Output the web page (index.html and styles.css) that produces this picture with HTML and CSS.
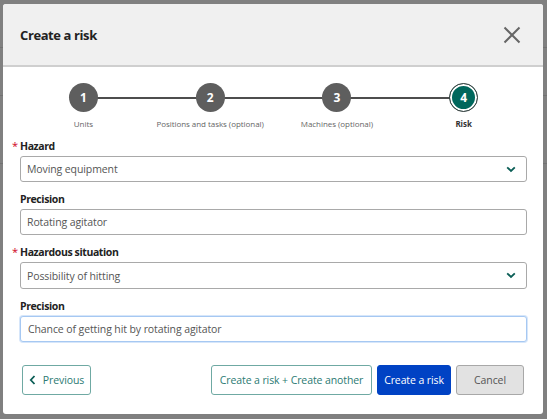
FILE: index.html
```html
<!DOCTYPE html>
<html lang="en">
<head>
<meta charset="utf-8">
<title>Create a risk</title>
<link rel="stylesheet" href="styles.css">
</head>
<body>
<div class="dialog">
  <div class="dialog-header">
    <h1 class="dialog-title">Create a risk</h1>
    <button class="close-btn" aria-label="Close">
      <svg width="18" height="18" viewBox="0 0 18 18"><path d="M1.5 1.5 L16.5 16.5 M16.5 1.5 L1.5 16.5" stroke="#666" stroke-width="2" fill="none"/></svg>
    </button>
  </div>
  <div class="dialog-body">
    <ol class="stepper">
      <li class="step"><span class="step-circle">1</span><span class="step-label">Units</span></li>
      <li class="step"><span class="step-circle">2</span><span class="step-label">Positions and tasks (optional)</span></li>
      <li class="step"><span class="step-circle">3</span><span class="step-label">Machines (optional)</span></li>
      <li class="step step-active"><span class="step-circle">4</span><span class="step-label">Risk</span></li>
    </ol>

    <div class="field">
      <label class="field-label required">Hazard</label>
      <div class="control select">
        <span class="control-text">Moving equipment</span>
        <svg class="chevron" width="10" height="7" viewBox="0 0 10 7"><path d="M1.2 1.3 L5 5 L8.8 1.3" stroke="#0b5e56" stroke-width="1.8" fill="none"/></svg>
      </div>
    </div>
    <div class="field">
      <label class="field-label">Precision</label>
      <div class="control"><span class="control-text">Rotating agitator</span></div>
    </div>
    <div class="field">
      <label class="field-label required">Hazardous situation</label>
      <div class="control select select-tall">
        <span class="control-text">Possibility of hitting</span>
        <svg class="chevron" width="10" height="7" viewBox="0 0 10 7"><path d="M1.2 1.3 L5 5 L8.8 1.3" stroke="#0b5e56" stroke-width="1.8" fill="none"/></svg>
      </div>
    </div>
    <div class="field">
      <label class="field-label">Precision</label>
      <div class="control focused"><span class="control-text">Chance of getting hit by rotating agitator</span></div>
    </div>

    <div class="footer">
      <button class="btn btn-outline btn-prev"><span class="btn-icon"><svg width="7" height="10" viewBox="0 0 7 10"><path d="M5.5 1 L1.8 5 L5.5 9" stroke="#0b5e56" stroke-width="1.8" fill="none"/></svg></span><span>Previous</span></button>
      <div class="footer-actions">
        <button class="btn btn-outline btn-another">Create a risk + Create another</button>
        <button class="btn btn-primary">Create a risk</button>
        <button class="btn btn-cancel">Cancel</button>
      </div>
    </div>
  </div>
</div>
</body>
</html>
```
FILE: styles.css
```css
* { box-sizing: border-box; }
html, body { margin: 0; padding: 0; }
body {
  width: 547px;
  height: 419px;
  overflow: hidden;
  background-color: #808080;
  background-image:
    linear-gradient(#727272, #727272),
    linear-gradient(#727272, #727272),
    linear-gradient(#727272, #727272);
  background-size: 100% 1px, 100% 1px, 100% 1px;
  background-position: 0 47px, 0 95px, 0 163px;
  background-repeat: no-repeat;
  font-family: "Open Sans", "Noto Sans", sans-serif;
  color: #333;
  padding: 4px 4px 0 3px;
}
.dialog {
  width: 540px;
  height: 410px;
  background: #fff;
  border-radius: 3px;
  overflow: hidden;
}
.dialog-header {
  height: 63px;
  background: #f0f0f0;
  border-bottom: 2px solid #cfcfcf;
  display: flex;
  align-items: center;
  justify-content: space-between;
  padding: 0 22px 0 17px;
}
.dialog-title {
  margin: 0;
  font-size: 13px;
  font-weight: 700;
  color: #222;
  letter-spacing: -0.4px;
}
.close-btn {
  border: 0;
  background: none;
  padding: 0;
  width: 18px;
  height: 18px;
  display: block;
}
.close-btn svg { display: block; }
.dialog-body {
  padding: 16px 16px 0 17px;
}
.stepper {
  list-style: none;
  margin: 0;
  padding: 0;
  display: grid;
  grid-template-columns: repeat(4, 1fr);
  height: 55px;
}
.step {
  position: relative;
  display: flex;
  flex-direction: column;
  align-items: center;
}
.step + .step::before {
  content: "";
  position: absolute;
  top: 14px;
  left: -50%;
  width: 100%;
  height: 2px;
  background: #4d4d4d;
  z-index: 0;
}
.step-circle {
  position: relative;
  z-index: 1;
  width: 29px;
  height: 29px;
  border-radius: 50%;
  background: #5e5e5e;
  color: #fff;
  font-size: 12px;
  font-weight: 700;
  display: flex;
  align-items: center;
  justify-content: center;
}
.step-active .step-circle {
  background: #00675c;
  border: 1.5px solid #3f3f3f;
  box-shadow: inset 0 0 0 2px #fff;
}
.step-label {
  margin-top: 6px;
  font-size: 8px;
  color: #666;
  white-space: nowrap;
  line-height: 12px;
  letter-spacing: -0.05px;
}
.step-active .step-label {
  font-weight: 700;
  color: #333;
}
.field { margin-bottom: 9px; }
.field-label {
  display: block;
  position: relative;
  font-size: 10.5px;
  font-weight: 700;
  color: #222;
  line-height: 16px;
  margin-bottom: 2px;
  letter-spacing: -0.4px;
}
.field-label.required::before {
  content: "*";
  position: absolute;
  left: -8px;
  top: 0;
  color: #d0021b;
  font-weight: 400;
  font-size: 11px;
}
.control {
  height: 26px;
  border: 1px solid #a9a9a9;
  border-radius: 3px;
  display: flex;
  align-items: center;
  justify-content: space-between;
  padding: 0 10px 0 6px;
  background: #fff;
}
.control.select-tall { height: 27px; }
.control.focused {
  border: 1.5px solid #a6c8f2;
  box-shadow: 0 0 0 1px #d6e6fa;
  padding-left: 7px;
}
.control-text {
  font-size: 10.5px;
  color: #555;
  letter-spacing: -0.1px;
}
.chevron { display: block; }
.footer {
  margin-top: 23px;
  padding: 0 3px 0 2px;
  display: flex;
  justify-content: space-between;
  align-items: center;
}
.footer-actions {
  display: flex;
  gap: 5px;
}
.btn {
  height: 30px;
  border-radius: 3px;
  font-family: inherit;
  font-size: 10.5px;
  letter-spacing: -0.1px;
  padding: 0;
  display: flex;
  align-items: center;
  justify-content: center;
  white-space: nowrap;
  cursor: pointer;
}
.btn-outline {
  background: #fff;
  border: 1px solid #6fa9a3;
  color: #2b7a72;
}
.btn-prev {
  width: 69px;
  gap: 7px;
}
.btn-icon { display: flex; align-items: center; }
.btn-icon svg { display: block; }
.btn-another { width: 161px; }
.btn-primary {
  background: #0042c4;
  border: 1px solid #0042c4;
  color: #fff;
  width: 74px;
}
.btn-cancel {
  background: #e2e2e2;
  border: 1px solid #a8a8a8;
  color: #555;
  width: 68px;
}
```
